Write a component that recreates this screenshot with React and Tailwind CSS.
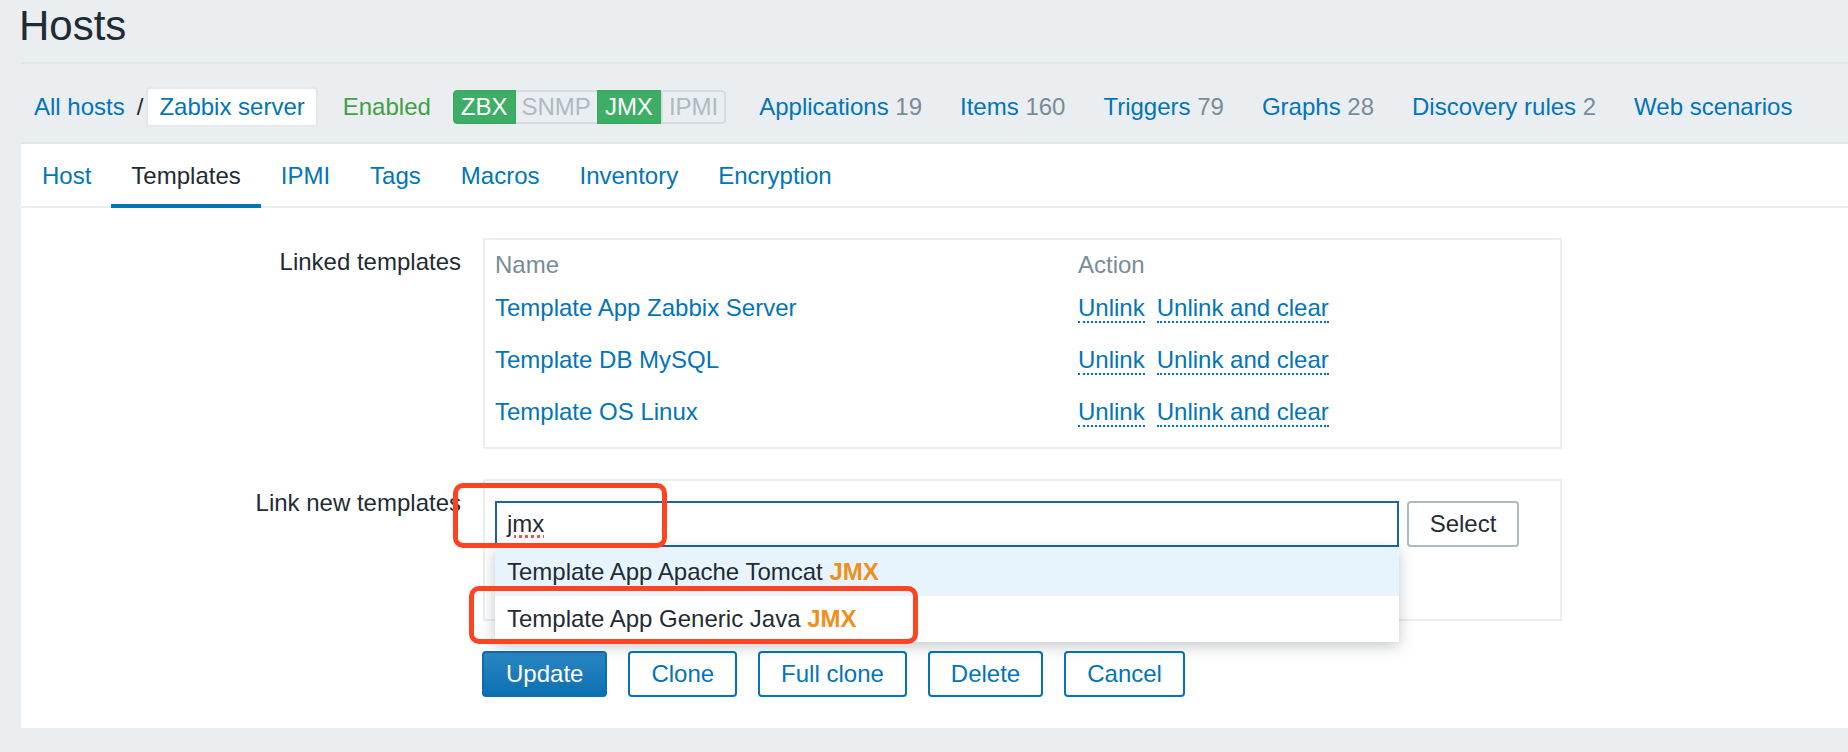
import React from "react";

const links = [
  ["Applications", "19"],
  ["Items", "160"],
  ["Triggers", "79"],
  ["Graphs", "28"],
  ["Discovery rules", "2"],
  ["Web scenarios", null],
];

const tabs = ["Host", "Templates", "IPMI", "Tags", "Macros", "Inventory", "Encryption"];

const linked = ["Template App Zabbix Server", "Template DB MySQL", "Template OS Linux"];

function ActionLink({ children }) {
  return (
    <span className="text-[#0275b8] border-b-2 border-dotted border-[#0275b8]">{children}</span>
  );
}

export default function App() {
  return (
    <div className="relative w-full h-[752px] overflow-hidden bg-[#ebeef1] font-['Liberation_Sans',Arial,sans-serif] text-[24px] leading-[28px] text-[#1f2c33]">
      {/* Header */}
      <div className="pl-[21px]">
        <div className="border-b-2 border-[#dfe4e7] pt-[5px] pb-[15px]">
          <h1 className="-ml-[2px] text-[42px] leading-[42px] font-normal">Hosts</h1>
        </div>
        <div className="flex items-center h-[78px] pt-[8px] pl-[13px] whitespace-nowrap">
          <span className="text-[#0275b8]">All hosts</span>
          <span className="ml-[12px] text-[#1f2c33]">/</span>
          <span className="ml-[3px] h-[40px] flex items-center px-[11px] bg-white border-2 border-[#e3e8eb] rounded-[4px] text-[#0275b8]">
            Zabbix server
          </span>
          <span className="ml-[25px] text-[#429e47]">Enabled</span>
          <div className="ml-[22px] flex rounded-[4px] overflow-hidden leading-[30px]">
            <span className="px-[6px] border-2 border-[#3aa962] bg-[#3eae67] text-white rounded-l-[4px]">ZBX</span>
            <span className="px-[6px] border-y-2 border-[#d5dde2] bg-[#ebeef1] text-[#acbbc2]">SNMP</span>
            <span className="px-[6px] border-2 border-[#3aa962] bg-[#3eae67] text-white">JMX</span>
            <span className="px-[6px] border-2 border-[#d5dde2] bg-[#ebeef1] text-[#acbbc2] rounded-r-[4px]">IPMI</span>
          </div>
          <div className="ml-[33px] flex gap-[38px]">
            {links.map(([name, n]) => (
              <span key={name}>
                <span className="text-[#0275b8]">{name}</span>
                {n && <span className="text-[#768d99]"> {n}</span>}
              </span>
            ))}
          </div>
        </div>
      </div>

      {/* Panel */}
      <div className="ml-[21px] h-[586px] bg-white border-t-2 border-[#dfe4e7]">
        <div className="flex pl-[1px] border-b-2 border-[#ebeef1]">
          {tabs.map((t) => (
            <div
              key={t}
              className={
                t === "Templates"
                  ? "h-[64px] -mb-[2px] pt-[4px] px-[20px] flex items-center border-b-4 border-[#0275b8] text-[#1f2c33]"
                  : "h-[64px] -mb-[2px] pt-[4px] px-[20px] flex items-center border-b-4 border-transparent text-[#0275b8]"
              }
            >
              {t}
            </div>
          ))}
        </div>

        <div className="pt-[30px]">
          {/* Linked templates */}
          <div className="flex">
            <div className="w-[440px] text-right pt-[10px]">Linked templates</div>
            <div className="ml-[22px] w-[1079px] border-2 border-[#ebeef1] px-[10px] pb-[9px]">
              <div className="h-[42px] pt-[8px] flex items-center text-[#768d99]">
                <div className="w-[583px]">Name</div>
                <div>Action</div>
              </div>
              {linked.map((l) => (
                <div key={l} className="h-[52px] flex items-center">
                  <div className="w-[583px] text-[#0275b8]">{l}</div>
                  <div className="whitespace-nowrap">
                    <ActionLink>Unlink</ActionLink>
                    <span className="inline-block w-[12px]" />
                    <ActionLink>Unlink and clear</ActionLink>
                  </div>
                </div>
              ))}
            </div>
          </div>

          {/* Link new templates */}
          <div className="flex mt-[30px]">
            <div className="w-[440px] text-right pt-[10px]">Link new templates</div>
            <div className="ml-[22px] w-[1079px] h-[142px] border-2 border-[#ebeef1] pt-[20px] pl-[10px]">
              <div className="flex">
                <div className="relative w-[904px] h-[46px]">
                  <div className="w-full h-full border-2 border-[#1b65a1] bg-white pl-[10px] flex items-center">
                    <span className="underline decoration-dotted decoration-[#e45a5c] decoration-[3px] underline-offset-[3px]">jmx</span>
                  </div>
                  <div className="absolute left-0 top-[46px] w-full z-10 bg-white shadow-[0_4px_14px_rgba(40,50,60,0.28)]">
                    <div className="h-[49px] bg-[#e8f4fd] pl-[12px] flex items-center">
                      Template App Apache Tomcat&nbsp;<b className="text-[#f0901c] font-bold">JMX</b>
                    </div>
                    <div className="h-[46px] bg-white pl-[12px] flex items-center">
                      Template App Generic Java&nbsp;<b className="text-[#f0901c] font-bold">JMX</b>
                    </div>
                  </div>
                </div>
                <div className="ml-[8px] w-[112px] h-[46px] flex items-center justify-center bg-white border-2 border-[#acbbc2] rounded-[4px] text-[#1f2c33]">
                  Select
                </div>
              </div>
            </div>
          </div>

          {/* Buttons */}
          <div className="flex gap-[21px] mt-[30px] ml-[461px]">
            <div className="h-[46px] px-[22px] flex items-center rounded-[4px] border-2 border-[#0b6fb0] bg-gradient-to-b from-[#2a86c4] to-[#0a70b2] text-white">Update</div>
            <div className="h-[46px] px-[21px] flex items-center rounded-[4px] border-2 border-[#0275b8] bg-white text-[#0275b8]">Clone</div>
            <div className="h-[46px] px-[21px] flex items-center rounded-[4px] border-2 border-[#0275b8] bg-white text-[#0275b8]">Full clone</div>
            <div className="h-[46px] px-[21px] flex items-center rounded-[4px] border-2 border-[#0275b8] bg-white text-[#0275b8]">Delete</div>
            <div className="h-[46px] px-[21px] flex items-center rounded-[4px] border-2 border-[#0275b8] bg-white text-[#0275b8]">Cancel</div>
          </div>
        </div>
      </div>

      {/* Red annotation boxes */}
      <div className="absolute left-[453px] top-[483px] w-[214px] h-[65px] border-[5px] border-[#fc4420] rounded-[10px] z-20" />
      <div className="absolute left-[469px] top-[586px] w-[449px] h-[58px] border-[5px] border-[#fc4420] rounded-[10px] z-20" />
    </div>
  );
}
